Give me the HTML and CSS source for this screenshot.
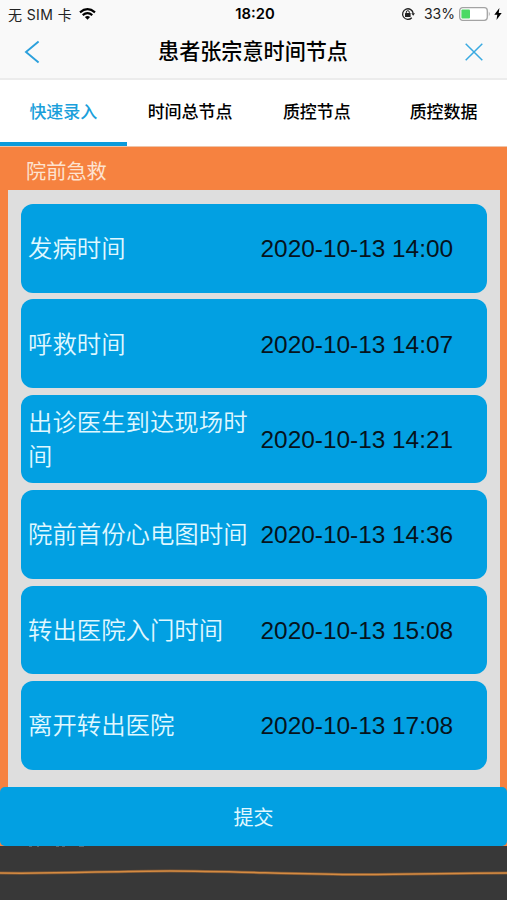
FILE: index.html
```html
<!DOCTYPE html>
<html lang="zh-CN">

<head>
  <meta charset="utf-8">
  <title>患者张宗意时间节点</title>
  <meta name="viewport" content="width=device-width, initial-scale=1">
  <link rel="stylesheet" href="styles.css">
</head>

<body>
  <header>
    <div class="status-bar">
      <div class="carrier">
        <span>无 SIM 卡</span>
        <svg class="wifi" viewBox="0 0 17 12" width="17" height="12">
          <path d="M1 4.3Q8.5-2 16 4.3" fill="none" stroke="#000" stroke-width="2.2" />
          <path d="M3.7 7.1Q8.5 3 13.3 7.1" fill="none" stroke="#000" stroke-width="2.1" />
          <path d="M5.9 9.1Q8.5 6.9 11.1 9.1L8.5 11.8Z" />
        </svg>
      </div>
      <div class="clock">18:20</div>
      <div class="power">
        <svg class="lock" viewBox="0 0 14 14" width="14" height="14">
          <path d="M10.8 10.7A5.3 5.3 0 1 1 12.2 6.5" fill="none" stroke="#222" stroke-width="1.3" />
          <path d="M10.3 6.2h3.7l-1.8 2.6z" fill="#222" />
          <rect x="4" y="6" width="5.6" height="4" rx=".5" fill="#222" />
          <path d="M5.3 6.5V5.2a1.5 1.5 0 0 1 3 0v1.3" fill="none" stroke="#222" />
        </svg>
        <span class="percent">33%</span>
        <svg class="battery" viewBox="0 0 32 14" width="32" height="14">
          <rect x=".7" y=".7" width="27.6" height="12.6" rx="3" fill="#fff" stroke="#a3a3a3" stroke-width="1.3" />
          <rect x="2.4" y="2.4" width="8.6" height="9.2" rx="1" fill="#4cd964" />
          <path d="M29.8 4.6q1.9 2.4 0 4.8z" fill="#a3a3a3" />
        </svg>
        <svg class="bolt" viewBox="0 0 8 12" width="8" height="12">
          <path d="M5.4 0L.3 6.7h3L2.5 12l5.2-7h-3z" />
        </svg>
      </div>
    </div>
    <div class="nav-bar">
      <svg viewBox="0 0 18 24" width="18" height="24">
        <path d="M15.6 1.5L3 12l12.6 10.4" fill="none" stroke="#2ba0dc" stroke-width="1.9" />
      </svg>
      <h1>患者张宗意时间节点</h1>
      <svg viewBox="0 0 18 18" width="18" height="18">
        <path d="M.7.7l16.6 16.6M17.3.7L.7 17.3" fill="none" stroke="#3aaae1" stroke-width="1.5" />
      </svg>
    </div>
  </header>
  <nav class="tabs">
    <a class="tab active">快速录入</a>
    <a class="tab">时间总节点</a>
    <a class="tab">质控节点</a>
    <a class="tab">质控数据</a>
  </nav>
  <main>
    <h2>院前急救</h2>
    <div class="panel">
      <div class="node">
        <span class="label">发病时间</span>
        <span class="time">2020-10-13 14:00</span>
      </div>
      <div class="node">
        <span class="label">呼救时间</span>
        <span class="time">2020-10-13 14:07</span>
      </div>
      <div class="node">
        <span class="label">出诊医生到达现场时间</span>
        <span class="time">2020-10-13 14:21</span>
      </div>
      <div class="node">
        <span class="label">院前首份心电图时间</span>
        <span class="time">2020-10-13 14:36</span>
      </div>
      <div class="node">
        <span class="label">转出医院入门时间</span>
        <span class="time">2020-10-13 15:08</span>
      </div>
      <div class="node">
        <span class="label">离开转出医院</span>
        <span class="time">2020-10-13 17:08</span>
      </div>
    </div>
  </main>
  <div class="submit-wrap">
    <button class="submit">提交</button>
  </div>
  <footer>
    <svg viewBox="0 0 507 54" width="507" height="54">
      <path d="M29 .5h3M37 .5h2M56 .5h3M62 .5h3M79 .5h5" stroke="#5d6569" />
      <path d="M0 27C60 28 110 25 170 25S300 28.5 360 28.5S450 27 507 27" fill="none" stroke="#7b5635" stroke-width="3" />
      <path d="M0 27C60 28 110 25 170 25S300 28.5 360 28.5S450 27 507 27" fill="none" stroke="#d58b42" stroke-width="1.5" />
    </svg>
  </footer>
</body>

</html>
```

FILE: styles.css
```css
* {
  box-sizing: border-box;
  margin: 0;
  padding: 0;
}

body {
  height: 900px;
  display: flex;
  flex-direction: column;
  overflow: hidden;
  font-family: "Liberation Sans", "Noto Sans CJK SC", sans-serif;
  background: #fff;
}

svg {
  display: block;
  flex: none;
}

header {
  height: 80px;
  background: #f9f9f9;
  border-bottom: 2px solid #ececec;
}

.status-bar {
  height: 27px;
  display: grid;
  grid-template-columns: 1fr auto 1fr;
  align-items: center;
  padding: 0 5px 0 8px;
  font-family: Inter, "Noto Sans CJK SC", sans-serif;
  font-size: 14px;
  color: #222;
}

.carrier,
.power {
  display: flex;
  align-items: center;
}

.carrier {
  gap: 7px;
  letter-spacing: 0.4px;
}

.clock {
  font-size: 14.8px;
  font-weight: 600;
  color: #000;
}

.power {
  justify-content: flex-end;
}

.percent {
  margin: 0 4px 0 9px;
}

.bolt {
  margin-left: 3px;
}

.nav-bar {
  height: 50px;
  display: flex;
  align-items: center;
  justify-content: space-between;
  padding: 0 24px 0 23px;
}

h1 {
  font-size: 21.1px;
  font-weight: 500;
  line-height: 30px;
}

.tabs {
  height: 67px;
  flex: none;
  display: grid;
  grid-template-columns: repeat(4, 1fr);
  border-bottom: 1px solid #efc4a8;
}

.tab {
  height: 66px;
  border-bottom: 4px solid transparent;
  text-align: center;
  font-size: 17px;
  font-weight: 500;
  line-height: 66px;
}

.tab.active {
  color: #1b9fdb;
  border-bottom-color: #0b9bdb;
}

main {
  height: 640px;
  flex: none;
  padding: 0 7px 0 8px;
  background: #f68240;
}

h2 {
  height: 43px;
  padding-left: 18px;
  font-size: 20.2px;
  font-weight: 400;
  line-height: 50px;
  color: #fde3d0;
}

.panel {
  height: 597px;
  display: flex;
  flex-direction: column;
  gap: 6.8px;
  padding: 14px 13px 0;
  background: #dedede;
}

.node {
  height: 88.6px;
  flex: none;
  display: flex;
  align-items: center;
  padding: 2px 0 0 7px;
  border-radius: 12px;
  background: #02a0e2;
}

.label {
  width: 232.5px;
  padding-right: 8px;
  font-size: 24.4px;
  font-weight: 350;
  line-height: 34px;
  color: #e0f8ff;
}

.time {
  font-size: 24.4px;
  color: #06131c;
  white-space: nowrap;
}

.submit-wrap {
  height: 59px;
  flex: none;
  background: #f68240;
}

.submit {
  display: block;
  width: 100%;
  height: 59px;
  border: none;
  border-radius: 5px;
  background: #02a0e2;
  font-family: inherit;
  font-size: 20px;
  color: #e0f8ff;
}

footer {
  height: 54px;
  background: #383838;
}
```
